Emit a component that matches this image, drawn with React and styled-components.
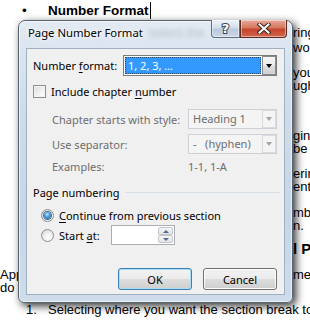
import React from 'react';
import styled, { createGlobalStyle, css } from 'styled-components';

const GlobalStyle = createGlobalStyle`
  html, body {
    margin: 0;
    background: #fff;
  }
`;

const Page = styled.div`
  position: relative;
  width: 310px;
  height: 320px;
  overflow: hidden;
  background: #fff;
  color: #000;
  font-family: 'Liberation Sans', Arial, sans-serif;
  font-size: 13px;
`;

// ---- the Word document behind the dialog ----

const Heading = styled.div`
  display: flex;
  align-items: center;
  height: 18px;
  margin-top: 1px;
  padding-left: 22px;
  font-weight: bold;
  font-size: 13.5px;
`;

const Bullet = styled.span`
  width: 26px;
  font-weight: normal;
`;

const Caret = styled.span`
  display: inline-block;
  width: 1px;
  height: 17px;
  margin-left: 1px;
  background: #000;
`;

const Line = styled.div`
  display: grid;
  grid-template-columns: 293px auto;
  height: ${(props) => props.$h || 13}px;
  line-height: ${(props) => props.$h || 13}px;
  margin-top: ${(props) => props.$mt || 0}px;
  white-space: nowrap;

  ${(props) =>
    props.$bold &&
    css`
      font-weight: bold;
      font-size: 15px;
    `}
`;

const Hidden = styled.span`
  overflow: hidden;
`;

const ListLine = styled.div`
  display: flex;
  margin-top: 9px;
  padding-left: 26px;
  line-height: 13px;
  white-space: nowrap;
`;

const ListNumber = styled.span`
  flex-shrink: 0;
  width: 22px;
`;

// ---- the dialog ----

const Dialog = styled.div`
  position: absolute;
  left: 18px;
  top: 20px;
  width: 275px;
  height: 283px;
  box-sizing: border-box;
  display: flex;
  flex-direction: column;
  padding: 0 7px 7px;
  border: 1px solid #56636f;
  border-radius: 7px 7px 6px 6px;
  background: linear-gradient(180deg, #e2eaf3 0%, #cfdcea 30%, #c6d6e7 70%, #cfdcea 100%);
  box-shadow: inset 0 0 0 1px rgba(255, 255, 255, 0.6), 3px 3px 9px rgba(0, 0, 0, 0.8);
  font-family: 'Noto Sans', 'Open Sans', sans-serif;
  font-size: 11px;
  color: #000;
`;

const TitleBar = styled.div`
  display: flex;
  align-items: flex-start;
  height: 27px;
`;

const Title = styled.div`
  padding: 4px 0 0 2px;
  line-height: 16px;
  font-size: 11.3px;
  text-shadow: 0 0 6px #fff, 0 0 3px #fff;
  white-space: nowrap;
`;

const GlassText = styled.div`
  padding: 4px 0 0 6px;
  line-height: 16px;
  color: transparent;
  text-shadow: 0 0 4px rgba(70, 80, 95, 0.25);
  font-family: 'Liberation Sans', Arial, sans-serif;
  font-size: 13px;
  white-space: nowrap;
`;

const CaptionGroup = styled.div`
  display: flex;
  margin: -1px -2px 0 auto;
`;

const CaptionButton = styled.div`
  display: flex;
  align-items: center;
  justify-content: center;
  box-sizing: border-box;
  height: 18px;
  width: ${(props) => (props.$close ? 47 : 29)}px;
  border: 1px solid ${(props) => (props.$close ? '#5b2c25' : '#5f6d7d')};
  border-top: none;
  border-radius: ${(props) => (props.$close ? '0 0 4px 0' : '0 0 0 4px')};
  background: ${(props) =>
    props.$close
      ? 'linear-gradient(180deg, #e9a99a 0%, #d4775f 45%, #c4452c 55%, #d0654b 100%)'
      : 'linear-gradient(180deg, #eef3f9 0%, #d3dfec 45%, #b9cbdf 55%, #c9d8e8 100%)'};
  box-shadow: inset 0 0 0 1px rgba(255, 255, 255, 0.45);
`;

const HelpGlyph = styled.span`
  font-family: 'DejaVu Sans', sans-serif;
  font-weight: bold;
  font-size: 13px;
  line-height: 13px;
  color: #fff;
  -webkit-text-stroke: 2px #3b4655;
  paint-order: stroke fill;
`;

const Client = styled.div`
  flex: 1;
  display: flex;
  flex-direction: column;
  padding: 6px 7px 4px 6px;
  border: 1px solid #9fb0c2;
  background: #f0f0f0;
`;

const FormatRow = styled.div`
  display: grid;
  grid-template-columns: 90px 1fr;
  align-items: center;
  height: 21px;
  white-space: nowrap;
`;

const Key = styled.span`
  text-decoration: underline;
  text-underline-offset: 2px;
`;

const Combo = styled.div`
  display: flex;
  box-sizing: border-box;
  height: ${(props) => (props.$disabled ? 20 : 21)}px;
  padding: 1px;
  border: 1px solid ${(props) => (props.$disabled ? '#cdd0d4' : '#7b7b7b')};
  background: ${(props) => (props.$disabled ? '#f4f4f4' : '#fff')};
`;

const ComboValue = styled.div`
  flex: 1;
  padding-left: 3px;
  line-height: ${(props) => (props.$disabled ? 16 : 17)}px;
  white-space: nowrap;
  color: ${(props) => (props.$selected ? '#fff' : '#6d6d6d')};
  background: ${(props) => (props.$selected ? '#3399ff' : 'transparent')};
  outline: ${(props) => (props.$selected ? '1px dotted #1f4f80' : 'none')};
  outline-offset: -1px;
`;

const ComboArrow = styled.div`
  display: flex;
  align-items: center;
  justify-content: center;
  width: 14px;
  margin: -1px -1px -1px 1px;
  box-sizing: border-box;
  border: 1px solid ${(props) => (props.$disabled ? '#d9dbde' : '#8a8a8a')};
  background: ${(props) =>
    props.$disabled
      ? '#f4f4f4'
      : 'linear-gradient(180deg, #f5f5f5 0%, #ebebeb 50%, #dcdcdc 50%, #d2d2d2 100%)'};
`;

const Triangle = styled.span`
  width: 0;
  height: 0;
  border-left: 3.5px solid transparent;
  border-right: 3.5px solid transparent;
  border-top: 4px solid ${(props) => (props.$disabled ? '#a4a4a4' : '#000')};
`;

const CheckRow = styled.div`
  display: flex;
  align-items: center;
  gap: 5px;
  height: 16px;
  margin-top: 7px;
`;

const CheckBox = styled.span`
  width: 13px;
  height: 13px;
  box-sizing: border-box;
  border: 1px solid #8e8f8f;
  background: linear-gradient(135deg, #d8d8d8 0%, #f4f4f4 60%, #fff 100%);
  box-shadow: inset 0 0 0 1px #f4f4f4;
`;

const FieldRow = styled.div`
  display: grid;
  grid-template-columns: 136px 89px;
  align-items: center;
  height: ${(props) => props.$h || 20}px;
  margin: ${(props) => props.$mt || 0}px 0 0 19px;
  color: #6d6d6d;
  white-space: nowrap;
`;

const GroupHeading = styled.div`
  display: flex;
  align-items: center;
  gap: 6px;
  height: 16px;
  margin: 10px -3px 0 0;

  &::after {
    content: '';
    flex: 1;
    height: 1px;
    background: #d5dfe5;
  }
`;

const RadioRow = styled.div`
  display: flex;
  align-items: center;
  gap: 5px;
  height: ${(props) => props.$h || 16}px;
  margin: ${(props) => props.$mt || 0}px 0 0 8px;
  white-space: nowrap;
`;

const Radio = styled.span`
  display: flex;
  align-items: center;
  justify-content: center;
  width: 13px;
  height: 13px;
  box-sizing: border-box;
  border-radius: 50%;
  border: 1px solid #8e8f8f;
  background: radial-gradient(circle at 60% 65%, #fff 0%, #f0f0f0 40%, #cfcfcf 100%);

  ${(props) =>
    props.$checked &&
    css`
      &::after {
        content: '';
        width: 7px;
        height: 7px;
        border-radius: 50%;
        background: radial-gradient(circle at 45% 35%, #b8e4fb 0%, #4b9ad6 45%, #1d4f8c 100%);
        box-shadow: 0 0 0 1px #3d6f9f;
      }
    `}
`;

const RadioLabel = styled.span`
  width: ${(props) => (props.$w ? `${props.$w}px` : 'auto')};
`;

const SpinBox = styled.div`
  display: flex;
  justify-content: flex-end;
  box-sizing: border-box;
  width: 64px;
  height: 20px;
  padding: 1px;
  border: 1px solid #abadb3;
  background: #fff;
`;

const SpinButtons = styled.div`
  display: flex;
  flex-direction: column;
  width: 15px;
`;

const SpinButton = styled.div`
  flex: 1;
  display: flex;
  align-items: center;
  justify-content: center;
  border: 1px solid #c2c6cc;
  border-radius: 2px;
  background: linear-gradient(180deg, #f6f6f6, #e2e3e5);
`;

const SpinArrow = styled.span`
  width: 0;
  height: 0;
  border-left: 3px solid transparent;
  border-right: 3px solid transparent;
  ${(props) => (props.$up ? 'border-bottom' : 'border-top')}: 3px solid #4c6e95;
`;

const ButtonRow = styled.div`
  display: flex;
  justify-content: flex-end;
  gap: 11px;
  margin-top: auto;
`;

const Button = styled.div`
  display: flex;
  align-items: center;
  justify-content: center;
  box-sizing: border-box;
  width: 74px;
  height: 22px;
  border: 1px solid ${(props) => (props.$default ? '#3c7fb1' : '#707070')};
  border-radius: 3px;
  background: linear-gradient(180deg, #f2f2f2 0%, #ebebeb 50%, #dddddd 50%, #cfcfcf 100%);
  box-shadow: inset 0 0 0 1px ${(props) => (props.$default ? '#a9dcf5' : '#fcfcfc')};
`;

function App() {
  return (
    <Page>
      <GlobalStyle />

      <Heading>
        <Bullet>•</Bullet>
        Number Format
        <Caret />
      </Heading>
      <Line $mt={7}><Hidden /><span>ring</span></Line>
      <Line $mt={2}><Hidden /><span>wo</span></Line>
      <Line $mt={12}><Hidden /><span>you</span></Line>
      <Line><Hidden /><span>ugh</span></Line>
      <Line $mt={37}><Hidden /><span>gins</span></Line>
      <Line><Hidden /><span>be</span></Line>
      <Line $mt={12}><Hidden /><span>ering</span></Line>
      <Line><Hidden /><span>ent</span></Line>
      <Line $mt={13}><Hidden /><span>mb</span></Line>
      <Line><Hidden /><span>n.</span></Line>
      <Line $mt={9} $h={16} $bold><Hidden /><span>l Pa</span></Line>
      <Line $mt={11}><Hidden>Apply</Hidden><span>me</span></Line>
      <Line><Hidden>do this</Hidden><span /></Line>
      <ListLine>
        <ListNumber>1.</ListNumber>
        Selecting where you want the section break to go
      </ListLine>

      <Dialog>
        <TitleBar>
          <Title>Page Number Format</Title>
          <GlassText>select the</GlassText>
          <CaptionGroup>
            <CaptionButton>
              <HelpGlyph>?</HelpGlyph>
            </CaptionButton>
            <CaptionButton $close>
              <svg width='14' height='11' viewBox='0 0 14 11'>
                <path d='M2.5 1.5 L11.5 9.5 M11.5 1.5 L2.5 9.5' stroke='#3a2420' strokeWidth='4' strokeLinecap='square' />
                <path d='M2.5 1.5 L11.5 9.5 M11.5 1.5 L2.5 9.5' stroke='#fff' strokeWidth='2' strokeLinecap='square' />
              </svg>
            </CaptionButton>
          </CaptionGroup>
        </TitleBar>

        <Client>
          <FormatRow>
            <span>
              Number <Key>f</Key>ormat:
            </span>
            <Combo>
              <ComboValue $selected>1, 2, 3, …</ComboValue>
              <ComboArrow>
                <Triangle />
              </ComboArrow>
            </Combo>
          </FormatRow>

          <CheckRow>
            <CheckBox />
            <span>
              Include chapter <Key>n</Key>umber
            </span>
          </CheckRow>

          <FieldRow $mt={10}>
            <span>Chapter starts with style:</span>
            <Combo $disabled>
              <ComboValue $disabled>Heading 1</ComboValue>
              <ComboArrow $disabled>
                <Triangle $disabled />
              </ComboArrow>
            </Combo>
          </FieldRow>
          <FieldRow $mt={5}>
            <span>Use separator:</span>
            <Combo $disabled>
              <ComboValue $disabled>-&nbsp;&nbsp;&nbsp;(hyphen)</ComboValue>
              <ComboArrow $disabled>
                <Triangle $disabled />
              </ComboArrow>
            </Combo>
          </FieldRow>
          <FieldRow $mt={4} $h={16}>
            <span>Examples:</span>
            <span>1-1, 1-A</span>
          </FieldRow>

          <GroupHeading>Page numbering</GroupHeading>

          <RadioRow $mt={7}>
            <Radio $checked />
            <RadioLabel>
              <Key>C</Key>ontinue from previous section
            </RadioLabel>
          </RadioRow>
          <RadioRow $mt={2} $h={20}>
            <Radio />
            <RadioLabel $w={47}>
              Start <Key>a</Key>t:
            </RadioLabel>
            <SpinBox>
              <SpinButtons>
                <SpinButton>
                  <SpinArrow $up />
                </SpinButton>
                <SpinButton>
                  <SpinArrow />
                </SpinButton>
              </SpinButtons>
            </SpinBox>
          </RadioRow>

          <ButtonRow>
            <Button $default>OK</Button>
            <Button>Cancel</Button>
          </ButtonRow>
        </Client>
      </Dialog>
    </Page>
  );
}

export default App;
